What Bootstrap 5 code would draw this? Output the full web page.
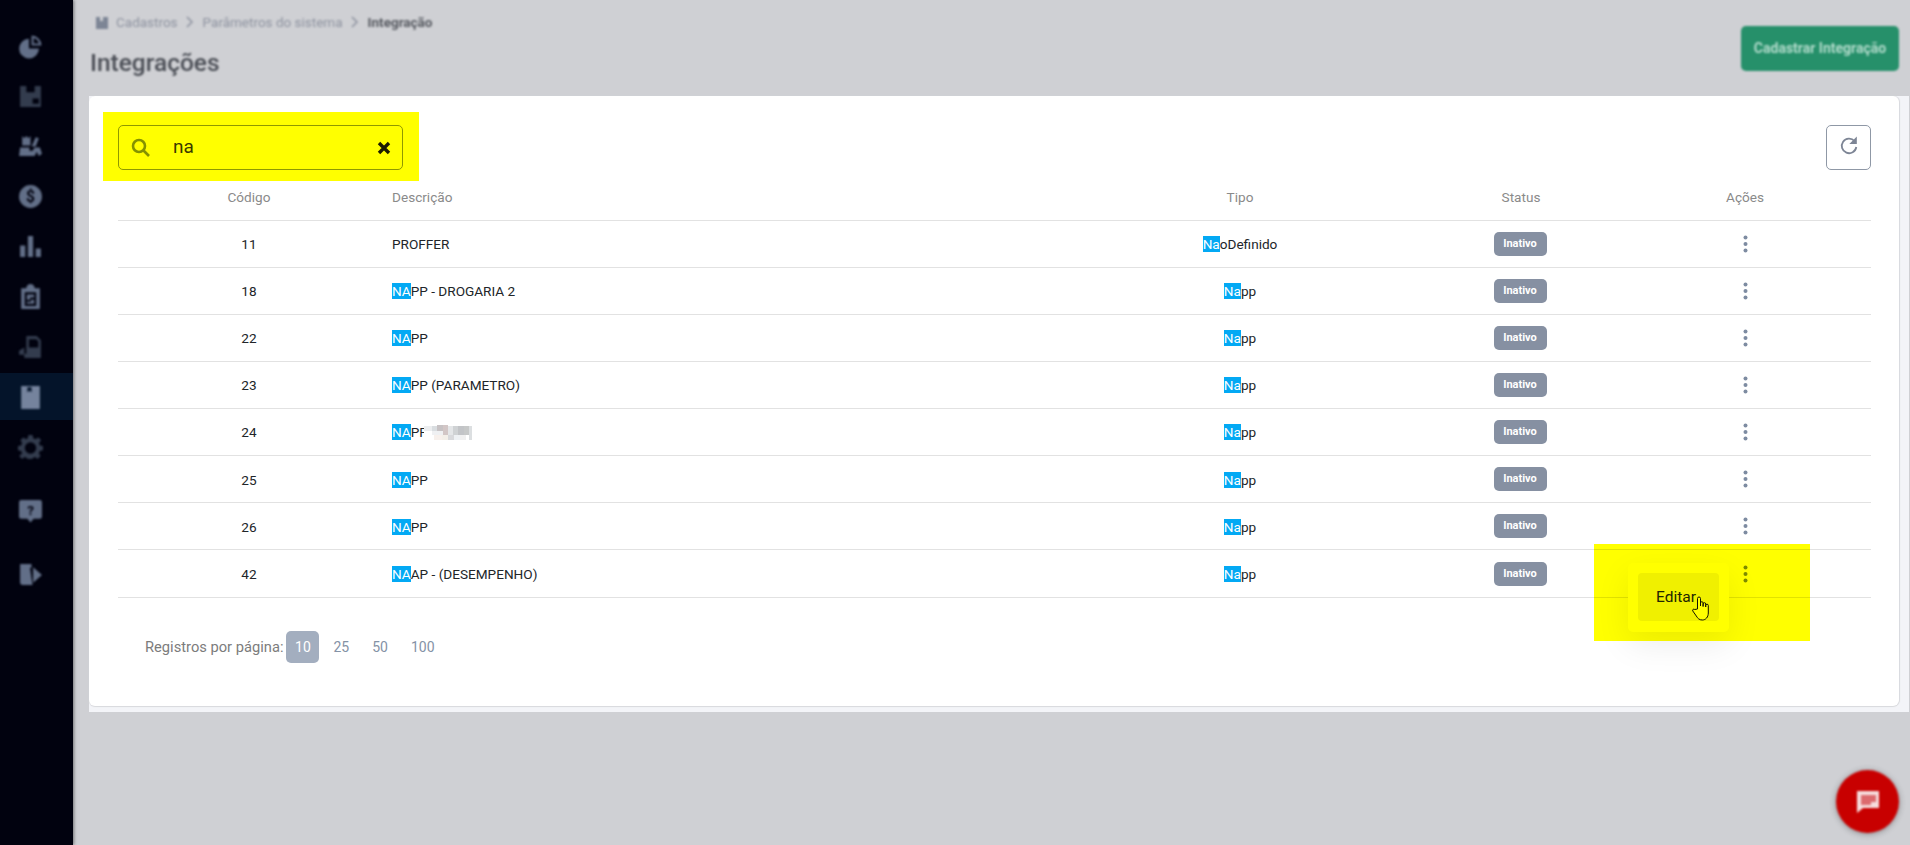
<!DOCTYPE html>
<html lang="pt-BR">
<head>
<meta charset="utf-8">
<title>Integrações</title>
<link href="https://cdn.jsdelivr.net/npm/bootstrap@5.3.0/dist/css/bootstrap.min.css" rel="stylesheet">
<style>
html,body{height:845px;overflow:hidden}
body{background:#cfd0d4;font-family:Roboto,"Liberation Sans",sans-serif;font-size:14px;color:#212529}
.rail{width:73px;height:845px;background:#01020f;flex:none;padding-top:23px;gap:3px;box-shadow:1px 0 3px rgba(0,0,0,.45)}
.rail-item{height:47px;padding-right:12px}
.rail-item svg{width:25px;height:25px;fill:#626f88;filter:blur(1.1px)}
.rail-item.dim svg{fill:#333c4e}
.rail-item.on{background:#04142a}
.rail-item.on svg{fill:#75839d}
.rail-sep{margin-top:14px}
.stage{width:1837px}
.topzone{height:96px;padding:0 11px 0 17px}
.soft{filter:blur(.85px)}
.crumbs{padding:13px 0 0 6px;height:50px;color:#8e93a0;gap:6.500px;line-height:18px;font-size:13.5px}
.crumbs .now{color:#55585f;font-weight:700;font-size:13.5px}
.crumbs svg{width:12px;height:14px;margin-top:2px}
.pagehead{font-size:24.500px;font-weight:500;color:#494c54;margin:-1px 0 0;line-height:28px}
.addbtn{width:158px;height:45px;margin-top:26px;background:#26906a;border:0;border-radius:5px;color:#b3dccc;font-weight:700;font-size:14px;padding:0}
.addbtn:hover{background:#26906a;color:#b3dccc}
.tray{margin:0 1px 0 16px;padding:0 10px 6px 0;background:#f3f4f8}
.sheet{background:#fff;height:610px;border-radius:6px;box-shadow:0 1px 1px #d8d9dd,1px 0 1px #d8d9dd;padding:29px 28px 0 29px}
.finder{width:285px;height:45px;border:1px solid #8f98a6;border-radius:5px;padding:0 11px 3px 12px}
.finder svg{margin-top:3px}
.finder-q{font-size:19px;color:#3a3a3a;margin-left:22px;flex:1;line-height:1;border:0;padding:0;outline:0;background:transparent;min-width:0;font-family:inherit}
.reload{width:45px;height:45px;border:1px solid #8f98a6;border-radius:5px;background:#fff;padding:0 0 3px}
.grid-t{table-layout:fixed;width:1753px;margin:0;font-size:13.600px}
.c1{width:262px}.c2{width:677px}.c3{width:366px}.c4{width:196px}.c5{width:252px}
.grid-t th{height:50px;font-weight:400;color:#8a8a8a;vertical-align:middle;padding:4px 12px 0;border-bottom:1px solid #e2e2e2;box-shadow:none}
.grid-t td{height:47.150px;padding:1px 12px 0;vertical-align:middle;border-bottom:1px solid #e2e2e2;color:#212529;box-shadow:none}
.hit{background:#03a9f4;color:#fff}
.tag-off{display:inline-block;width:53px;height:24px;line-height:23px;background:#8690a2;border-radius:5px;color:#fff;font-size:11px;font-weight:700;text-align:center;vertical-align:middle;margin:-1px 0 0 -2px}
.dots{width:5px;height:18px;fill:#7d8ba1;display:block;margin:-1px auto 0}
.mosaic{width:48px;height:16px;margin-left:-4px;vertical-align:-4px}
.sizes{margin:33px 0 0 27px;height:32px;color:#7c7c7c;font-size:14.700px}
.sizes-n{color:#8492a6;padding:0 9px;line-height:32px;font-size:14px}
.sizes-n.act{background:#a3aebf;color:#fff;border-radius:5px;width:33px;padding:0;text-align:center;margin-left:3px;margin-right:5px}
.sizes-n.gapx{margin-right:5px}
.pop{right:170px;top:467px;width:101px;height:69px;background:#fff;border-radius:5px;padding:10px;box-shadow:0 12px 34px rgba(0,0,0,.08);z-index:2}
.pop-i{height:48px;background:#f0f0f0;border-radius:4px;font-size:15.500px;padding-left:18px;line-height:48px;color:#212529}
.pointer{right:187px;top:500px;width:20px;height:25px;z-index:3}
.mark-a{left:14px;top:16px;width:316px;height:69px;background:#ff0;mix-blend-mode:multiply;z-index:4}
.mark-b{right:89px;top:448px;width:216px;height:97px;background:#ff0;mix-blend-mode:multiply;z-index:4}
.chat{left:1836px;top:770px;width:63px;height:63px;background:#c80000;border-radius:50%;box-shadow:0 1px 6px rgba(0,0,0,.35);filter:blur(.9px);border:0;padding:0}
</style>
</head>
<body class="d-flex m-0">
<aside class="rail d-flex flex-column">
  <div class="rail-item d-flex align-items-center justify-content-center"><svg viewBox="0 0 24 24"><path d="M10.500 4.500v9.500h9.600A9.500 9.500 0 1 1 10.500 4.500z"/><path fill-rule="evenodd" d="M13 1.500a9.500 9.500 0 0 1 9.500 9.500H13zM15 3.800v5.200h5.200A7.500 7.500 0 0 0 15 3.800z"/></svg></div>
  <div class="rail-item dim d-flex align-items-center justify-content-center"><svg viewBox="0 0 24 24"><path fill-rule="evenodd" d="M2 2h20v20H2zM8 2v6h8V2zM14 14h6v5h-6z"/></svg></div>
  <div class="rail-item d-flex align-items-center justify-content-center"><svg viewBox="0 0 24 24"><path d="M4 2l2 2 2-2 2 2 2-2v9H4zM17 3l3 1-3 8h-4zM2 13h9v3h3l2-3h5l2 6-3 2-2-4-2 4H1z"/></svg></div>
  <div class="rail-item d-flex align-items-center justify-content-center"><svg viewBox="0 0 24 24"><circle cx="12" cy="12" r="11"/><text x="12" y="17.500" text-anchor="middle" font-family="Roboto" font-weight="700" font-size="15" fill="#01020f">$</text></svg></div>
  <div class="rail-item d-flex align-items-center justify-content-center"><svg viewBox="0 0 24 24"><path d="M2 11h5v11H2zM9.500 2h5v20h-5zM17 14h5v8h-5z"/></svg></div>
  <div class="rail-item d-flex align-items-center justify-content-center"><svg viewBox="0 0 24 24"><path fill-rule="evenodd" d="M3 4h5a4 4 0 0 1 8 0h5v20H3zM6.500 8v13h11V8zM8.500 10h7v3h-4v2h4v4h-7v-2h4v-2h-4z"/></svg></div>
  <div class="rail-item dim d-flex align-items-center justify-content-center"><svg viewBox="0 0 24 24"><path fill-rule="evenodd" d="M8 2h10l4 4v17H6v-4h2zM10.500 5v8h9V7l-2-2zM1 16l5-3v7H1z"/></svg></div>
  <div class="rail-item on d-flex align-items-center justify-content-center"><svg viewBox="0 0 24 24"><path fill-rule="evenodd" d="M3 2h18v22H3zM9 3v5l2-1.500L13 8V3z"/></svg></div>
  <div class="rail-item dim d-flex align-items-center justify-content-center"><svg viewBox="0 0 24 24"><path fill-rule="evenodd" d="M10 1h4l.6 3 2.300 1 2.600-1.700 2.800 2.800L20 8.700l1 2.300 3 .6v4l-3 .6-1 2.300 1.700 2.600-2.800 2.800-2.600-1.700-2.300 1-.6 1.800h-4l-.6-1.800-2.300-1-2.600 1.700-2.800-2.800L4 18.500l-1-2.300-3-.6v-4l3-.6 1-2.300-1.700-2.600 2.800-2.800L7.700 5l1.700-1zM12 8a5.500 5.500 0 1 0 0 11 5.500 5.500 0 0 0 0-11z"/></svg></div>
  <div class="rail-item rail-sep d-flex align-items-center justify-content-center"><svg viewBox="0 0 24 24"><path d="M3 2h18a2 2 0 0 1 2 2v14a2 2 0 0 1-2 2h-6l-3 3.500L9 20H3a2 2 0 0 1-2-2V4a2 2 0 0 1 2-2z"/><text x="12" y="16" text-anchor="middle" font-family="Roboto" font-weight="700" font-size="13" fill="#01020f">?</text></svg></div>
  <div class="rail-item rail-sep d-flex align-items-center justify-content-center"><svg viewBox="0 0 24 24"><path d="M2 2h11v3.500h-1.500L14 22H4a2 2 0 0 1-2-2zM14.500 5l8.500 7.500-8.500 7.500z"/></svg></div>
</aside>
<main class="stage d-flex flex-column">
  <header class="topzone d-flex justify-content-between align-items-start">
    <div class="soft">
      <div class="crumbs d-flex align-items-start">
        <span class="d-flex align-items-center gap-2"><svg viewBox="0 0 12 14" fill="#7d8595"><path fill-rule="evenodd" d="M0 1h12v12H0zM4 1v4.500l1.500-1 1.500 1V1z"/></svg>Cadastros</span>
        <svg viewBox="0 0 12 14" fill="none" stroke="#8e93a0" stroke-width="1.500"><path d="M3 2l5 5-5 5"/></svg>
        <span>Parâmetros do sistema</span>
        <svg viewBox="0 0 12 14" fill="none" stroke="#8e93a0" stroke-width="1.500"><path d="M3 2l5 5-5 5"/></svg>
        <span class="now">Integração</span>
      </div>
      <h1 class="pagehead">Integrações</h1>
    </div>
    <button type="button" class="btn addbtn soft">Cadastrar Integração</button>
  </header>
  <div class="tray">
    <section class="sheet position-relative">
      <div class="d-flex justify-content-between">
        <div class="finder d-flex align-items-center">
          <svg width="20" height="20" viewBox="0 0 20 20" fill="none" stroke="#8492a6" stroke-width="2.600"><circle cx="8" cy="8" r="6"/><path d="M12.500 12.500l5.500 5.500"/></svg>
          <input class="finder-q" type="text" value="na" aria-label="Buscar">
          <svg width="14" height="14" viewBox="0 0 14 14" stroke="#1c1c1c" stroke-width="3.400"><path d="M2 2l10 10M12 2L2 12"/></svg>
        </div>
        <button type="button" class="btn reload d-flex align-items-center justify-content-center" aria-label="Atualizar"><svg width="20" height="20" viewBox="0 0 20 20" fill="none" stroke="#7d8595" stroke-width="1.800"><path d="M15.500 5A7.300 7.300 0 1 0 17.300 11"/><path d="M17.800 0.500v7.500h-7.500z" fill="#7d8595" stroke="none"/></svg></button>
      </div>
      <table class="table grid-t text-center">
        <colgroup><col class="c1"><col class="c2"><col class="c3"><col class="c4"><col class="c5"></colgroup>
        <thead><tr><th>Código</th><th class="text-start">Descrição</th><th>Tipo</th><th>Status</th><th>Ações</th></tr></thead>
        <tbody>
          <tr><td>11</td><td class="text-start">PROFFER</td><td><span class="hit">Na</span>oDefinido</td><td><span class="tag-off">Inativo</span></td><td><svg class="dots" viewBox="0 0 5 18"><circle cx="2.500" cy="2.500" r="2"/><circle cx="2.500" cy="9" r="2"/><circle cx="2.500" cy="15.500" r="2"/></svg></td></tr>
          <tr><td>18</td><td class="text-start"><span class="hit">NA</span>PP - DROGARIA 2</td><td><span class="hit">Na</span>pp</td><td><span class="tag-off">Inativo</span></td><td><svg class="dots" viewBox="0 0 5 18"><circle cx="2.500" cy="2.500" r="2"/><circle cx="2.500" cy="9" r="2"/><circle cx="2.500" cy="15.500" r="2"/></svg></td></tr>
          <tr><td>22</td><td class="text-start"><span class="hit">NA</span>PP</td><td><span class="hit">Na</span>pp</td><td><span class="tag-off">Inativo</span></td><td><svg class="dots" viewBox="0 0 5 18"><circle cx="2.500" cy="2.500" r="2"/><circle cx="2.500" cy="9" r="2"/><circle cx="2.500" cy="15.500" r="2"/></svg></td></tr>
          <tr><td>23</td><td class="text-start"><span class="hit">NA</span>PP (PARAMETRO)</td><td><span class="hit">Na</span>pp</td><td><span class="tag-off">Inativo</span></td><td><svg class="dots" viewBox="0 0 5 18"><circle cx="2.500" cy="2.500" r="2"/><circle cx="2.500" cy="9" r="2"/><circle cx="2.500" cy="15.500" r="2"/></svg></td></tr>
          <tr><td>24</td><td class="text-start"><span class="hit">NA</span>PP<svg class="mosaic" viewBox="0 0 48 16"><rect width="48" height="16" fill="#fff"/><rect x="0" y="1" width="8" height="5" fill="#eceef0"/><rect x="8" y="1" width="5" height="5" fill="#d9dde0"/><rect x="13" y="0" width="6" height="6" fill="#c7c2c4"/><rect x="19" y="0" width="5" height="10" fill="#d2c6c6"/><rect x="24" y="1" width="5" height="9" fill="#e4e6e8"/><rect x="29" y="1" width="5" height="9" fill="#cfd2d4"/><rect x="34" y="1" width="6" height="9" fill="#c2c4c7"/><rect x="40" y="1" width="5" height="9" fill="#c6c8c8"/><rect x="45" y="1" width="3" height="14" fill="#dcdfe1"/><rect x="8" y="6" width="11" height="4" fill="#eff0f2"/><rect x="10" y="10" width="8" height="5" fill="#f7f0ec"/><rect x="18" y="10" width="6" height="5" fill="#f3efe9"/><rect x="24" y="10" width="6" height="5" fill="#d8d9dc"/><rect x="30" y="10" width="6" height="5" fill="#eef1f4"/><rect x="36" y="10" width="6" height="5" fill="#f0f0f0"/></svg></td><td><span class="hit">Na</span>pp</td><td><span class="tag-off">Inativo</span></td><td><svg class="dots" viewBox="0 0 5 18"><circle cx="2.500" cy="2.500" r="2"/><circle cx="2.500" cy="9" r="2"/><circle cx="2.500" cy="15.500" r="2"/></svg></td></tr>
          <tr><td>25</td><td class="text-start"><span class="hit">NA</span>PP</td><td><span class="hit">Na</span>pp</td><td><span class="tag-off">Inativo</span></td><td><svg class="dots" viewBox="0 0 5 18"><circle cx="2.500" cy="2.500" r="2"/><circle cx="2.500" cy="9" r="2"/><circle cx="2.500" cy="15.500" r="2"/></svg></td></tr>
          <tr><td>26</td><td class="text-start"><span class="hit">NA</span>PP</td><td><span class="hit">Na</span>pp</td><td><span class="tag-off">Inativo</span></td><td><svg class="dots" viewBox="0 0 5 18"><circle cx="2.500" cy="2.500" r="2"/><circle cx="2.500" cy="9" r="2"/><circle cx="2.500" cy="15.500" r="2"/></svg></td></tr>
          <tr><td>42</td><td class="text-start"><span class="hit">NA</span>AP - (DESEMPENHO)</td><td><span class="hit">Na</span>pp</td><td><span class="tag-off">Inativo</span></td><td><svg class="dots" viewBox="0 0 5 18"><circle cx="2.500" cy="2.500" r="2"/><circle cx="2.500" cy="9" r="2"/><circle cx="2.500" cy="15.500" r="2"/></svg></td></tr>
        </tbody>
      </table>
      <div class="sizes d-flex align-items-center">
        <span>Registros por página:</span>
        <span class="sizes-n act">10</span><span class="sizes-n gapx">25</span><span class="sizes-n gapx">50</span><span class="sizes-n">100</span>
      </div>
      <div class="pop position-absolute"><div class="pop-i">Editar</div></div>
      <svg class="pointer position-absolute" viewBox="0 0 20 25" fill="#fff" stroke="#111" stroke-width="1" stroke-linejoin="round"><path d="M5.500 13V2.500a1.500 1.500 0 0 1 3 0V10V7a1.300 1.300 0 0 1 2.600 0v3.500V8a1.300 1.300 0 0 1 2.600 0v3V9.500a1.300 1.300 0 0 1 2.600 0V17c0 4-2.500 7-6 7-3 0-4.500-1.500-6-4l-3.500-5c-.8-1.300.8-2.500 2-1.500z"/></svg>
      <div class="mark-a position-absolute"></div>
      <div class="mark-b position-absolute"></div>
    </section>
  </div>
</main>
<button type="button" class="chat position-fixed d-flex align-items-center justify-content-center" aria-label="Chat"><svg width="26" height="26" viewBox="0 0 26 26"><path d="M2 2h22v17H8l-6 5z" fill="#f6dede"/><path d="M6 6h15v7h-5v3H6z" fill="#dc6a6e"/></svg></button>
<script src="https://cdn.jsdelivr.net/npm/bootstrap@5.3.0/dist/js/bootstrap.bundle.min.js"></script>
</body>
</html>
